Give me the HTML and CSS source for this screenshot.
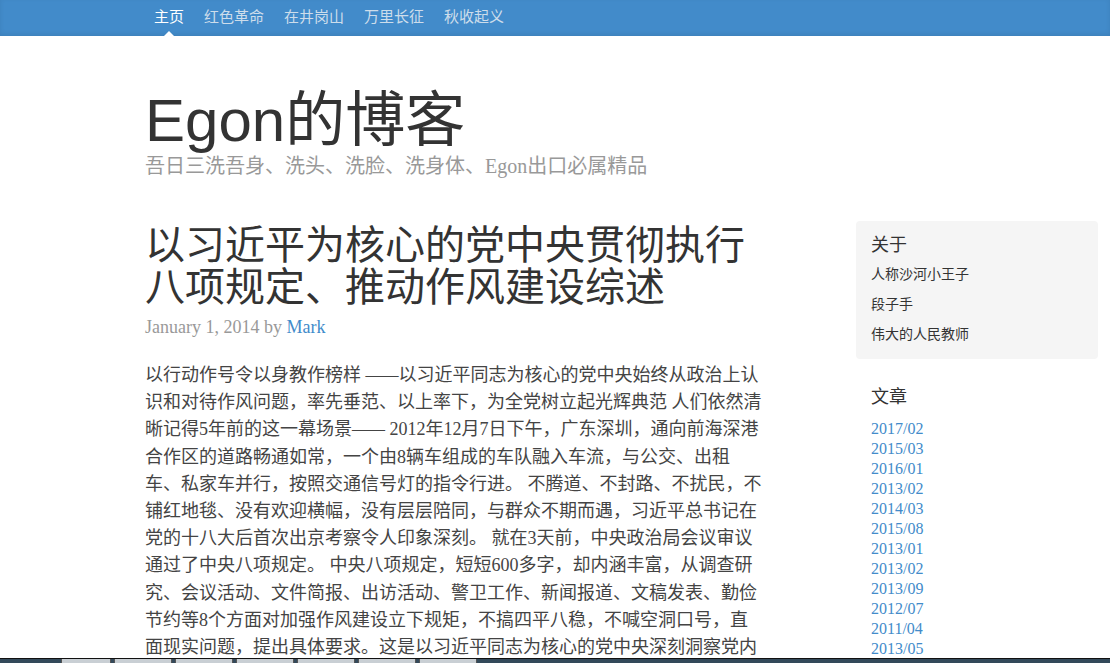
FILE: index.html
```html
<!DOCTYPE html>
<html lang="zh-CN">
<head>
<meta charset="utf-8">
<title>Egon的博客</title>
<link rel="stylesheet" href="styles.css">
</head>
<body>
<div class="masthead">
  <nav class="nav">
    <a class="nav-item active" href="#">主页</a>
    <a class="nav-item" href="#">红色革命</a>
    <a class="nav-item" href="#">在井岗山</a>
    <a class="nav-item" href="#">万里长征</a>
    <a class="nav-item" href="#">秋收起义</a>
  </nav>
</div>

<div class="container">
  <header class="blog-header">
    <h1 class="blog-title">Egon的博客</h1>
    <p class="blog-desc">吾日三洗吾身、洗头、洗脸、洗身体、Egon出口必属精品</p>
  </header>

  <div class="row">
    <main class="blog-main">
      <h2 class="post-title">以习近平为核心的党中央贯彻执行八项规定、推动作风建设综述</h2>
      <p class="post-meta">January 1, 2014 by <a href="#">Mark</a></p>
      <p class="post-body">以行动作号令以身教作榜样 <span class="dash">——</span>以习近平同志为核心的党中央始终从政治上认<br>识和对待作风问题，率先垂范、以上率下，为全党树立起光辉典范 人们依然清<br>晰记得5年前的这一幕场景<span class="dash">——</span> 2012年12月7日下午，广东深圳，通向前海深港<br>合作区的道路畅通如常，一个由8辆车组成的车队融入车流，与公交、出租<br>车、私家车并行，按照交通信号灯的指令行进。 不腾道、不封路、不扰民，不<br>铺红地毯、没有欢迎横幅，没有层层陪同，与群众不期而遇，习近平总书记在<br>党的十八大后首次出京考察令人印象深刻。 就在3天前，中央政治局会议审议<br>通过了中央八项规定。 中央八项规定，短短600多字，却内涵丰富，从调查研<br>究、会议活动、文件简报、出访活动、警卫工作、新闻报道、文稿发表、勤俭<br>节约等8个方面对加强作风建设立下规矩，不搞四平八稳，不喊空洞口号，直<br>面现实问题，提出具体要求。这是以习近平同志为核心的党中央深刻洞察党内</p>
    </main>

    <aside class="sidebar">
      <div class="module about">
        <h4 class="module-title">关于</h4>
        <p>人称沙河小王子</p>
        <p>段子手</p>
        <p>伟大的人民教师</p>
      </div>
      <div class="module archives">
        <h4 class="module-title">文章</h4>
        <ol class="archive-list">
          <li><a href="#">2017/02</a></li>
          <li><a href="#">2015/03</a></li>
          <li><a href="#">2016/01</a></li>
          <li><a href="#">2013/02</a></li>
          <li><a href="#">2014/03</a></li>
          <li><a href="#">2015/08</a></li>
          <li><a href="#">2013/01</a></li>
          <li><a href="#">2013/02</a></li>
          <li><a href="#">2013/09</a></li>
          <li><a href="#">2012/07</a></li>
          <li><a href="#">2011/04</a></li>
          <li><a href="#">2013/05</a></li>
        </ol>
      </div>
    </aside>
  </div>
</div>

<div class="taskbar">
  <span class="tb-btn"></span>
  <span class="tb-btn"></span>
  <span class="tb-btn"></span>
  <span class="tb-btn"></span>
  <span class="tb-btn"></span>
  <span class="tb-btn"></span>
  <span class="tb-btn"></span>
</div>
</body>
</html>
```

FILE: styles.css
```css
html, body {
  margin: 0;
  padding: 0;
}
body {
  background: #fff;
  color: #333;
  font-family: "Liberation Serif", "Noto Sans CJK SC", serif;
  font-size: 18px;
  overflow: hidden;
  height: 663px;
}
a {
  color: #428bca;
  text-decoration: none;
}

.masthead {
  background: #428bca;
  height: 36px;
  box-shadow: inset 0 -2px 5px rgba(0,0,0,.08);
}
.nav {
  display: flex;
  padding-left: 144px;
  height: 36px;
}
.nav-item {
  position: relative;
  display: block;
  padding: 0 10px;
  line-height: 34px;
  font-family: "Liberation Sans", "Noto Sans CJK SC", sans-serif;
  font-size: 15px;
  color: #cdddeb;
}
.nav-item.active {
  color: #fff;
}
.nav-item.active::after {
  content: "";
  position: absolute;
  left: 50%;
  bottom: 0;
  margin-left: -5px;
  border-left: 5px solid transparent;
  border-right: 5px solid transparent;
  border-bottom: 5px solid #fff;
}

.container {
  padding-left: 145px;
  padding-right: 12px;
}

.blog-header {
  padding-top: 50px;
  padding-bottom: 40px;
}
.blog-title {
  margin: 0;
  font-family: "Liberation Sans", "Noto Sans CJK SC", sans-serif;
  font-weight: normal;
  font-size: 60px;
  line-height: 70px;
  color: #333;
}
.blog-desc {
  margin: -4px 0 0;
  font-size: 20px;
  line-height: 28px;
  color: #999;
}

.row {
  display: flex;
  justify-content: space-between;
  align-items: flex-start;
}
.blog-main {
  width: 640px;
}
.post-title {
  margin: 4px 0 0;
  width: 614px;
  font-family: "Liberation Sans", "Noto Sans CJK SC", sans-serif;
  font-weight: normal;
  font-size: 40px;
  line-height: 42px;
  color: #333;
}
.post-meta {
  margin: 4px 0 20px;
  font-size: 18px;
  line-height: 30px;
  color: #999;
}
.post-body {
  margin: 0;
  font-size: 18px;
  line-height: 27.2px;
  color: #444;
  white-space: nowrap;
}
.dash {
  letter-spacing: -3px;
  margin-right: 3px;
}

.sidebar {
  width: 242px;
  margin-top: 1px;
}
.module {
  padding: 11px 15px 10px;
}
.about {
  background: #f5f5f5;
  border-radius: 4px;
}
.module-title {
  margin: 0 0 1px;
  font-family: "Liberation Sans", "Noto Sans CJK SC", sans-serif;
  font-weight: normal;
  font-size: 18px;
  line-height: 26px;
  color: #333;
}
.about p {
  margin: 0;
  font-family: "Liberation Sans", "Noto Sans CJK SC", sans-serif;
  font-size: 14px;
  line-height: 30px;
  color: #333;
}
.archives {
  padding-top: 25px;
}
.archives .module-title {
  margin-bottom: 9px;
}
.archive-list {
  list-style: none;
  margin: 0;
  padding: 0;
}
.archive-list li {
  font-size: 16px;
  line-height: 20px;
}

.taskbar {
  position: fixed;
  left: 0;
  right: 0;
  bottom: 0;
  height: 4px;
  border-top: 1px solid #111;
  background: #33495a;
  display: flex;
  gap: 3px;
  padding-left: 61px;
}
.tb-btn {
  display: block;
  width: 56px;
  height: 4px;
  background: #c9cfd4;
  border-left: 1px solid #555;
  border-right: 1px solid #555;
}
.tb-btn:first-child {
  width: 48px;
}
```
